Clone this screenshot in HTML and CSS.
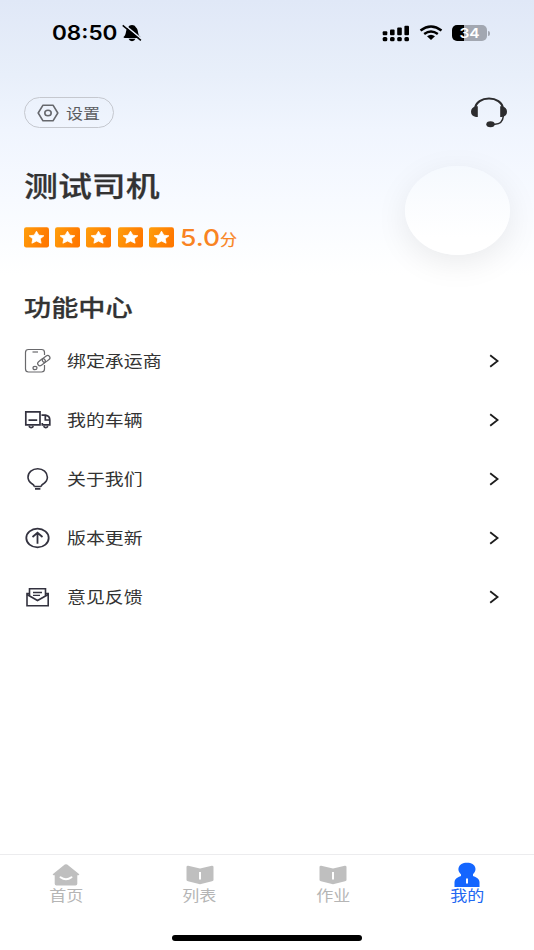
FILE: index.html
```html
<!DOCTYPE html>
<html lang="zh-CN">
<head>
<meta charset="utf-8">
<title>我的</title>
<link rel="stylesheet" href="styles.css">
</head>
<body>
<svg class="defs" width="0" height="0" aria-hidden="true">
  <defs>
    <linearGradient id="orange" x1="0" y1="0" x2="1" y2="0.3"><stop offset="0" stop-color="#ff9e0b"/><stop offset="1" stop-color="#ff7800"/></linearGradient>
    <symbol id="star" viewBox="0 0 25 21"><rect x="0" y="0.3" width="25" height="20.2" rx="2.2" fill="url(#orange)"/><path d="M12.5 4.2l2.3 4 5.1.6-3.7 3 .9 4.4-4.6-2.1-4.6 2.1.9-4.4-3.7-3 5.1-.6z" fill="#fff" stroke="#fff" stroke-width=".8" stroke-linejoin="round"/></symbol>
    <symbol id="chevron" viewBox="0 0 10 14"><path d="M1.2 1.2L8.6 7 1.2 12.8" fill="none" stroke="#1c1c1c" stroke-width="1.8"/></symbol>
    <symbol id="book" viewBox="0 0 28 20"><path d="M2.2.8L14 3.6 25.8.8Q27.5.7 27.5 2V15Q27.5 16 26 16.300L14 19.300 2 16.300Q.5 16 .5 15V2Q.5.7 2.2.8Z" fill="#bfbfbf"/><path d="M14 7v7.400" stroke="#fff" stroke-width="2"/></symbol>
  </defs>
</svg>
<div class="app">
  <header class="status">
    <span class="time">08:50</span>
    <svg class="bell" width="20" height="18" viewBox="0 0 20 18"><path d="M1.500 13C5 10.500 3 6 6 3.500 7.500.2 12.500.2 14 3.500 17 6 15 10.500 18.500 13Q18.500 14 17 14H3Q1.500 14 1.500 13ZM6.500 14.800H13.500Q12.500 17.200 10 17.200T6.500 14.800Z" fill="#000"/><path d="M1.700.2L20 15.300" stroke="#e5ecf9" stroke-width="1.500"/><path d="M.7 1.400L18.900 16.400" stroke="#000" stroke-width="1.500"/></svg>
    <svg class="signal" width="28" height="17" viewBox="0 0 28 17"><g fill="#000"><rect x=".7" y="6.200" width="4.600" height="4" rx="1"/><rect x="8" y="4.600" width="4.600" height="5.600" rx="1"/><rect x="15.200" y="2.600" width="4.600" height="7.600" rx="1"/><rect x="22.400" y=".8" width="4.600" height="9.400" rx="1"/><rect x=".7" y="12" width="4.600" height="4.300" rx="1.500"/><rect x="8" y="12" width="4.600" height="4.300" rx="1.500"/><rect x="15.200" y="12" width="4.600" height="4.300" rx="1.500"/><rect x="22.400" y="12" width="4.600" height="4.300" rx="1.500"/></g></svg>
    <svg class="wifi" width="24" height="16" viewBox="0 0 24 16"><g fill="none" stroke="#000" stroke-width="2.400"><path d="M1.500 5.500Q12-2.500 22.500 5.500"/><path d="M5.200 9Q12 3.800 18.800 9"/></g><path d="M8 11.300Q12 8.300 16 11.300L12 15Z" fill="#000"/></svg>
    <span class="battery"><span class="level">34</span></span><i class="cap"></i>
  </header>

  <div class="tools">
    <button class="settings">
      <svg width="22" height="18" viewBox="0 0 22 18"><path d="M6 1.200H16L20.800 9 16 16.800H6L1.200 9Z" fill="none" stroke="#66686d" stroke-width="1.600" stroke-linejoin="round"/><ellipse cx="11" cy="9" rx="3.200" ry="2.700" fill="none" stroke="#66686d" stroke-width="1.600"/></svg>
      <span class="wide">设置</span>
    </button>
    <svg class="service" width="38" height="32" viewBox="0 0 38 32"><path d="M5 12C6-2 32-2 33 12" fill="none" stroke="#2c2c2e" stroke-width="2.200"/><path d="M7.800 9.300V20H6Q1 19 1 14.700T6 9.300ZM30.200 9.300V20H32Q37 19 37 14.700T32 9.300Z" fill="#2c2c2e"/><path d="M33.500 18.500Q32.500 27.300 25 27.300H21" fill="none" stroke="#2c2c2e" stroke-width="1.500"/><ellipse cx="20.500" cy="27.300" rx="4.200" ry="3" fill="#2c2c2e"/></svg>
  </div>

  <section class="profile">
    <div class="person">
      <h1 class="wide">测试司机</h1>
      <div class="rating">
        <svg width="25" height="21"><use href="#star"/></svg><svg width="25" height="21"><use href="#star"/></svg><svg width="25" height="21"><use href="#star"/></svg><svg width="25" height="21"><use href="#star"/></svg><svg width="25" height="21"><use href="#star"/></svg>
        <span class="score">5.0</span><span class="unit">分</span>
      </div>
    </div>
    <div class="avatar"></div>
  </section>

  <h2 class="wide">功能中心</h2>
  <nav class="menu">
    <a class="row"><svg width="28" height="26" viewBox="0 0 28 26"><g fill="none" stroke="#69696c" stroke-width="1.200"><path d="M20.500 7V4.500Q20.500 1.500 17.500 1.500H4.500Q1.500 1.500 1.500 4.500V21Q1.500 24 4.500 24H17.500Q20.500 24 20.500 21V17"/><path d="M8.500 4H14"/><ellipse cx="11" cy="20" rx="2" ry="1.700"/><rect x="13.300" y="12" width="8.400" height="4.600" rx="2.300" transform="rotate(-38 17.500 14.300)"/><rect x="17.900" y="8.600" width="8.400" height="4.600" rx="2.300" transform="rotate(-38 22.100 10.900)"/></g></svg><span class="wide">绑定承运商</span><svg class="arrow" width="10" height="14"><use href="#chevron"/></svg></a>
    <a class="row"><svg width="28" height="26" viewBox="0 0 28 26"><g fill="none" stroke="#33323f" stroke-width="1.700"><path d="M1.800 4.800H16V17.800H1.800ZM4.500 13.200H13.200M17.500 8.200H21.500Q25.800 9 25.800 13V17.800H18.300V16M21.300 9V13H25.500M4.800 19.300Q7.200 22 9.500 19.300M19.500 19.300Q21.800 22 24 19.300"/></g></svg><span class="wide">我的车辆</span><svg class="arrow" width="10" height="14"><use href="#chevron"/></svg></a>
    <a class="row"><svg width="28" height="26" viewBox="0 0 28 26"><path d="M10.300 20.500Q10 19 8 17.800C5.500 16 4 14.500 4 11.200C4 6.400 8.300 2.800 13.700 2.800S23.400 6.400 23.400 11.200C23.400 14.500 22 16 19.400 17.800Q17.400 19 17.100 20.500M10.300 20.500H17.100M11 22.900H16.400" fill="none" stroke="#33323f" stroke-width="1.600"/></svg><span class="wide">关于我们</span><svg class="arrow" width="10" height="14"><use href="#chevron"/></svg></a>
    <a class="row"><svg width="28" height="26" viewBox="0 0 28 26"><g fill="none" stroke="#33323f" stroke-width="1.800"><ellipse cx="13.500" cy="13" rx="11.200" ry="9.300"/><path d="M13.500 18.800V8M8.500 12L13.500 7.800 18.500 12"/></g></svg><span class="wide">版本更新</span><svg class="arrow" width="10" height="14"><use href="#chevron"/></svg></a>
    <a class="row"><svg width="28" height="26" viewBox="0 0 28 26"><g fill="none" stroke="#33323f" stroke-width="1.600"><path d="M5.500 9.500H3V21.800H24.200V9.500H21.500"/><path d="M5.500 12V4.800H21.500V12M3 10.500L13.500 16.500 24.200 10.500"/><path d="M9 8.500H18M9 11.300H16" stroke-width="1.300"/></g></svg><span class="wide">意见反馈</span><svg class="arrow" width="10" height="14"><use href="#chevron"/></svg></a>
  </nav>

  <footer>
    <div class="tabs">
      <a class="tab"><svg width="28" height="26" viewBox="0 0 28 26"><path d="M12.800 2.600Q14 1.800 15.200 2.600L27 12Q28 13.300 26 13.300H25.300V21.800Q25.300 23.500 23.500 23.500H4.500Q2.700 23.500 2.700 21.800V13.300H2Q0 13.300 1 12Z" fill="#bfbfbf"/><path d="M8.500 15.300Q14 19.300 19.500 15.300" fill="none" stroke="#fff" stroke-width="2" stroke-linecap="round"/></svg><span class="wide">首页</span></a>
      <a class="tab"><svg class="book" width="28" height="20"><use href="#book"/></svg><span class="wide">列表</span></a>
      <a class="tab"><svg class="book" width="28" height="20"><use href="#book"/></svg><span class="wide">作业</span></a>
      <a class="tab active"><svg width="28" height="26" viewBox="0 0 28 26"><path d="M9.500 13.500C2.500 9 5 .8 14 .8S25.500 9 18.500 13.500Q26.500 15.500 26.500 20V25H1.500V20Q1.500 15.500 9.500 13.500Z" fill="#1466ff"/><path d="M8 9H20V16H8Z" fill="#1466ff"/><path d="M14 16.500V21.500" stroke="#fff" stroke-width="2"/></svg><span class="wide">我的</span></a>
    </div>
    <div class="home"></div>
  </footer>
</div>
</body>
</html>
```
FILE: styles.css
```css
* { box-sizing: border-box; }
body { margin: 0; font-family: "Noto Sans CJK SC", sans-serif; color: #333; }
.defs { position: absolute; }
svg { display: block; flex: none; }
h1, h2 { margin: 0; white-space: nowrap; -webkit-text-stroke: .25px #333; }
.app {
  width: 534px; height: 950px; display: flex; flex-direction: column; overflow: hidden;
  background: linear-gradient(#e0e8f7 0, #e8effa 75px, #f0f5fe 130px, #f7faff 200px, #fff 275px);
}
/* the type is set wider than its natural proportions */
.wide { display: block; width: max-content; transform: scaleX(1.19); transform-origin: left center; }

.status { height: 66px; display: flex; align-items: center; padding-left: 52px; font-family: Inter, sans-serif; }
.time { width: 70px; font-size: 19.5px; line-height: 24px; font-weight: 600; color: #000; transform: scaleX(1.155); transform-origin: left center; }
.signal { margin-left: 240px; }
.wifi { margin-left: 9px; }
.battery { width: 35px; height: 16px; margin-left: 9px; border-radius: 5px; overflow: hidden; background: linear-gradient(90deg, #000 34%, #a2a7b1 34%); text-align: center; }
.level { display: block; color: #fff; font-size: 13.5px; line-height: 16px; font-weight: 600; transform: scaleX(1.15); }
.cap { width: 2px; height: 5px; margin-left: 1px; border-radius: 0 2px 2px 0; background: #a2a7b1; }

.tools { height: 94px; padding: 31px 26px 0 24px; display: flex; justify-content: space-between; align-items: flex-start; }
.settings { width: 90px; height: 31px; padding: 0 0 0 12px; display: flex; align-items: center; gap: 7px; border: 1px solid #c5c8cf; border-radius: 16px; background: transparent; font: 14.3px/19px "Noto Sans CJK SC", sans-serif; color: #5b5c60; }

.profile { height: 122px; padding: 0 24.5px 0 24px; display: flex; justify-content: space-between; }
.person h1 { margin-top: 5px; font-size: 28.5px; line-height: 40px; font-weight: 500; }
.rating { display: flex; align-items: center; height: 24px; margin-top: 20px; gap: 6.2px; }
.score { width: 34px; margin-top: 1px; font: 500 23px/24px Inter, sans-serif; color: #f98322; transform: scaleX(1.15); transform-origin: left center; }
.unit { margin: 3px 0 0 0; font-size: 14.3px; line-height: 18px; color: #f98322; -webkit-text-stroke: .2px #f98322; transform: scaleX(1.19); transform-origin: left center; }
.avatar { width: 105px; height: 89px; margin-top: 6px; border-radius: 50%; background: linear-gradient(#f5f9fe, #fff 80%); box-shadow: 0 8px 32px rgba(0, 0, 0, .08); }

h2 { margin: 9px 0 0 24px; font-size: 22.8px; line-height: 32px; font-weight: 500; }
.menu { margin-top: 8.4px; padding: 0 35px 0 24px; }
.row { height: 59.1px; display: flex; align-items: center; font-size: 15.9px; line-height: 24px; }
.row .wide { margin-left: 14.6px; }
.arrow { margin-left: auto; }

footer { height: 96px; margin-top: auto; border-top: 1px solid #ececee; background: #fff; }
.tabs { display: flex; height: 80px; margin-left: -1px; }
.tab { flex: 1; display: flex; flex-direction: column; align-items: center; padding-top: 7px; color: #b5b5b5; font-size: 14.3px; line-height: 18px; }
.tab .wide { margin-top: -2px; transform-origin: center; }
.tab .book { margin: 3px 0; }
.active { color: #2168f2; }
.home { width: 190px; height: 6px; margin: 0 auto; border-radius: 3px; background: #000; }
```
